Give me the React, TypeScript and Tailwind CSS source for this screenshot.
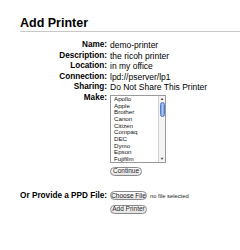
import React from 'react';

const ROWS: [string, string][] = [
  ['Name:', 'demo-printer'],
  ['Description:', 'the ricoh printer'],
  ['Location:', 'in my office'],
  ['Connection:', 'lpd://pserver/lp1'],
  ['Sharing:', 'Do Not Share This Printer'],
];

const MAKES = ['Apollo', 'Apple', 'Brother', 'Canon', 'Citizen', 'Compaq', 'DEC', 'Dymo', 'Epson', 'Fujifilm'];

const Pill: React.FC<{ label: string; w: string }> = ({ label, w }) => (
  <div
    className={`${w} h-[9px] flex items-center justify-center whitespace-nowrap rounded-full border border-[#8a8a8a] bg-gradient-to-b from-white to-[#e2e2e2] text-[6.5px] leading-none text-[#222]`}
  >
    {label}
  </div>
);

const App: React.FC = () => {
  return (
    <div className="w-[240px] h-[250px] bg-white overflow-hidden" style={{ fontFamily: '"Liberation Sans", Arial, sans-serif' }}>
      <div className="pl-[20px] pt-[16px]">
        <h1 className="text-[12.5px] font-bold leading-[14px] text-black pb-[1px] border-b border-[#c8c8c8]">Add Printer</h1>
      </div>

      <div className="mt-[8px] pl-[20px] grid grid-cols-[87px_1fr] gap-x-[3px] text-[8.5px] leading-[10.6px] text-black">
        {ROWS.map(([label, value]) => (
          <React.Fragment key={label}>
            <div className="text-right font-bold text-[8.2px]">{label}</div>
            <div className="whitespace-nowrap">{value}</div>
          </React.Fragment>
        ))}

        <div className="text-right font-bold text-[8.2px]">Make:</div>
        <div className="pt-[2px]">
          <div className="w-[56px] h-[68px] border border-[#9a9a9a] flex overflow-hidden">
            <div className="flex-1 pl-[3px] text-[6.2px] leading-[6.65px] text-[#111]">
              {MAKES.map((m) => (
                <div key={m}>{m}</div>
              ))}
            </div>
            <div className="w-[7px] border-l border-[#d0d0d0] bg-[#f4f4f4] flex flex-col items-center">
              <div className="text-[4px] leading-[6px] text-[#333]">▲</div>
              <div className="w-[5px] h-[15px] rounded-full bg-gradient-to-r from-[#6f9be8] via-[#a9c6f7] to-[#6f9be8] border border-[#5479c4]" />
              <div className="flex-1" />
              <div className="text-[4px] leading-[6px] text-[#333]">▼</div>
            </div>
          </div>
          <div className="mt-[4px]">
            <Pill label="Continue" w="w-[32px]" />
          </div>
        </div>
      </div>

      <div className="mt-[15px] pl-[20px] grid grid-cols-[87px_1fr] gap-x-[3px] text-black">
        <div className="text-right font-bold text-[8.2px] leading-[10px] whitespace-nowrap self-center">Or Provide a PPD File:</div>
        <div className="flex items-center gap-[3px]">
          <Pill label="Choose File" w="w-[37px]" />
          <span className="text-[5.8px] text-[#222] whitespace-nowrap">no file selected</span>
        </div>
        <div />
        <div className="mt-[4px]">
          <Pill label="Add Printer" w="w-[37px]" />
        </div>
      </div>
    </div>
  );
};

export default App;
